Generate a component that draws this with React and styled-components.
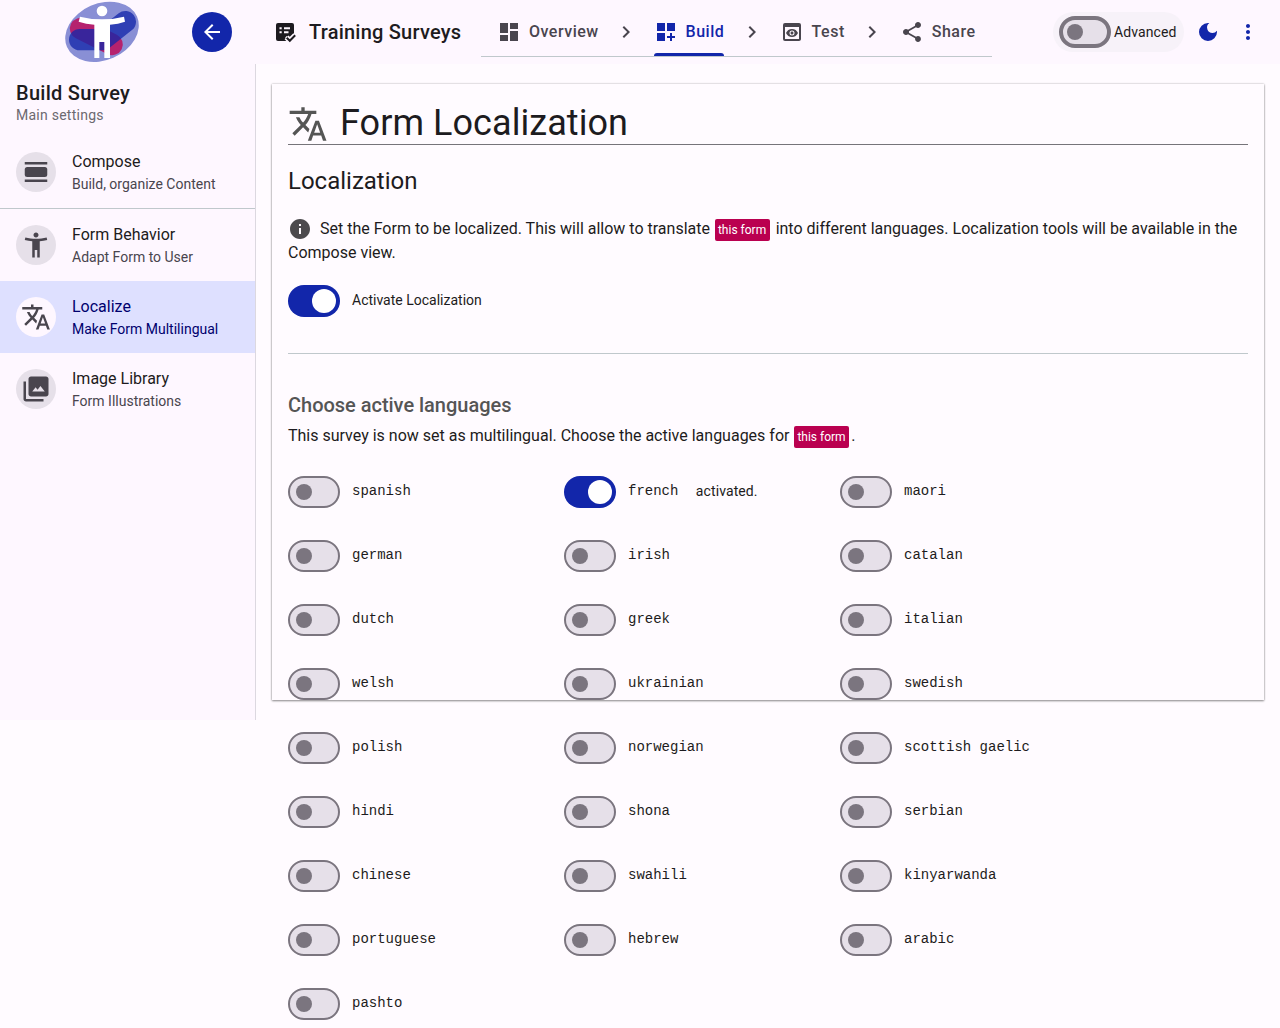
import React from "react";
import styled, { createGlobalStyle, css } from "styled-components";
import {
  MdAccessibilityNew,
  MdArrowBack,
  MdChevronRight,
  MdDarkMode,
  MdDashboard,
  MdDashboardCustomize,
  MdInfo,
  MdMoreVert,
  MdPreview,
  MdShare,
} from "react-icons/md";

const color = {
  primary: "#1226aa",
  surface: "#fef7ff",
  page: "#fffbff",
  text: "#1d1b20",
  muted: "#49454e",
  outline: "#7b757f",
  track: "#e6e0e9",
  line: "#c0c8cc",
  tag: "#ba0050",
};

const GlobalStyle = createGlobalStyle`
  *, *::before, *::after { box-sizing: border-box; }
  body {
    margin: 0;
    background: ${color.page};
    color: ${color.text};
    font-family: Roboto, sans-serif;
    font-size: 16px;
    line-height: 24px;
  }
  h1, h2, h3, p { margin: 0; font-weight: 400; }
`;

const Page = styled.div`
  height: 1028px;
  overflow: hidden;
`;

/* ---------- header ---------- */
const Header = styled.header`
  display: flex;
  align-items: center;
  height: 64px;
  padding-right: 20px;
  background: ${color.surface};
`;
const LogoSlot = styled.div`
  display: flex;
  width: 192px;
  height: 64px;
  padding-left: 65px;
`;
const BackButton = styled.button`
  display: grid;
  place-items: center;
  width: 40px;
  height: 40px;
  padding: 0;
  border: 0;
  border-radius: 50%;
  background: ${color.primary};
  color: #fff;
`;
const Project = styled.div`
  display: flex;
  align-items: center;
  gap: 12px;
  width: 208px;
  margin-left: 41px;
  font-size: 20px;
  font-weight: 500;
  letter-spacing: 0.22px;
  white-space: nowrap;
`;
const Tabs = styled.nav`
  display: flex;
  align-items: center;
  width: 511px;
  height: 49px;
  margin-top: 8px;
  margin-bottom: 7px;
  border-bottom: 1px solid ${color.line};
  color: ${color.muted};
  & > svg { flex: none; }
`;
const Tab = styled.a`
  display: flex;
  height: 48px;
  flex: none;
  width: ${(p) => p.$width}px;
  padding: 0 16px;
  color: ${(p) => (p.$active ? color.primary : color.muted)};
`;
const TabLabel = styled.span`
  position: relative;
  display: flex;
  align-items: center;
  gap: 8px;
  flex: 1;
  font-weight: 500;
  letter-spacing: 0.5px;
  white-space: nowrap;
  ${(p) =>
    p.$active &&
    css`
      &::after {
        content: "";
        position: absolute;
        inset: auto 0 0;
        height: 3px;
        border-radius: 3px 3px 0 0;
        background: ${color.primary};
      }
    `}
  svg { flex: none; }
`;
const Actions = styled.div`
  display: flex;
  align-items: center;
  gap: 12px;
  margin-left: auto;
  color: ${color.primary};
`;
const AdvancedPill = styled.div`
  display: flex;
  align-items: center;
  gap: 3px;
  width: 131px;
  height: 40px;
  padding-left: 6px;
  border-radius: 20px;
  background: #f7f2f9;
  color: ${color.text};
  font-size: 14px;
  letter-spacing: 0.1px;
`;
const MenuSlot = styled.div`
  display: flex;
  padding-left: 4px;
`;

/* ---------- switch ---------- */
const Track = styled.span`
  display: flex;
  flex: none;
  align-items: center;
  justify-content: ${(p) => (p.$on ? "flex-end" : "flex-start")};
  width: 52px;
  height: 32px;
  padding: 0 ${(p) => (p.$on ? 4 : 8 - p.$border)}px;
  border: ${(p) => (p.$on ? "0" : `${p.$border}px solid ${color.outline}`)};
  border-radius: 16px;
  background: ${(p) => (p.$on ? color.primary : color.track)};
`;
const Thumb = styled.span`
  width: ${(p) => (p.$on ? 24 : 16)}px;
  height: ${(p) => (p.$on ? 24 : 16)}px;
  border-radius: 50%;
  background: ${(p) => (p.$on ? "#fff" : color.outline)};
`;
const Switch = ({ on = false, border = 2 }) => (
  <Track $on={on} $border={border} role="switch" aria-checked={on}>
    <Thumb $on={on} />
  </Track>
);

/* ---------- sidebar ---------- */
const Body = styled.div`
  display: flex;
  align-items: flex-start;
`;
const Sidebar = styled.aside`
  flex: none;
  width: 256px;
  height: 656px;
  border-right: 1px solid #dcd8e0;
  background: ${color.surface};
`;
const SidebarHead = styled.div`
  height: 72px;
  padding: 17px 16px 0;
`;
const SidebarTitle = styled.h2`
  font-size: 20px;
  font-weight: 500;
  letter-spacing: 0.28px;
`;
const SidebarHint = styled.p`
  font-size: 14px;
  line-height: 20px;
  letter-spacing: 0.25px;
  color: #6c6970;
`;
const Item = styled.a`
  display: flex;
  gap: 16px;
  height: ${(p) => (p.$divided ? 73 : 72)}px;
  padding: 16px 16px 0;
  border-bottom: ${(p) => (p.$divided ? `1px solid ${color.line}` : "0")};
  background: ${(p) => (p.$active ? "#dee0ff" : "transparent")};
  color: ${(p) => (p.$active ? "#00006e" : color.text)};
`;
const Avatar = styled.span`
  display: grid;
  flex: none;
  place-items: center;
  width: 40px;
  height: 40px;
  border-radius: 50%;
  background: ${(p) => (p.$active ? color.surface : color.track)};
  color: ${color.muted};
`;
const ItemTitle = styled.div`
  margin-top: -2px;
  line-height: 24px;
`;
const ItemText = styled.div`
  font-size: 14px;
  line-height: 20px;
  white-space: nowrap;
  color: ${(p) => (p.$active ? "inherit" : color.muted)};
`;

/* ---------- main ---------- */
const Card = styled.main`
  width: 992px;
  height: 616px;
  margin: 20px 0 0 16px;
  padding: 0 16px;
  box-shadow: 0 1px 2px rgba(0, 0, 0, 0.4), 0 0 2px rgba(0, 0, 0, 0.25);
`;
const CardTitle = styled.h1`
  display: flex;
  align-items: flex-end;
  gap: 12px;
  height: 61px;
  border-bottom: 1px solid #76747a;
  font-size: 36px;
  line-height: 42px;
  letter-spacing: 0.06px;
  svg { color: #555; }
`;
const SectionTitle = styled.h2`
  margin-top: 20px;
  font-size: 24px;
  line-height: 32px;
`;
const Lead = styled.p`
  margin-top: 20px;
  svg {
    margin-right: 8px;
    vertical-align: -7px;
    color: #4c4a4d;
  }
`;
const Tag = styled.span`
  display: inline-block;
  height: 22px;
  margin: 0 2px 0 1px;
  padding: 0 3.5px 0 3px;
  border-radius: 2px;
  background: ${color.tag};
  color: #fff;
  font-size: 12px;
  line-height: 22px;
  vertical-align: 0;
`;
const SwitchRow = styled.label`
  display: flex;
  align-items: center;
  gap: 12px;
  margin-top: 20px;
  font-size: 14px;
`;
const LabelText = styled.span`
  padding-bottom: 2px;
  line-height: 20px;
`;
const Divider = styled.hr`
  margin: 36px 0 0;
  border: 0;
  border-top: 1px solid ${color.line};
`;
const SubTitle = styled.h3`
  margin-top: 39px;
  font-size: 20px;
  font-weight: 500;
  letter-spacing: -0.02px;
  color: #555;
`;
const Note = styled.p`
  margin-top: 7px;
`;
const Languages = styled.div`
  display: grid;
  grid-template-columns: repeat(3, 276px);
  grid-auto-rows: 64px;
  margin-top: 28px;
`;
const Language = styled.div`
  display: flex;
  align-items: center;
  gap: 12px;
  height: 32px;
  font-size: 14px;
  line-height: 20px;
`;
const Code = styled.span`
  padding-bottom: 3px;
  font-family: "Liberation Mono", monospace;
`;
const Status = styled.span`
  padding: 0 0 2px 5.4px;
  letter-spacing: 0.1px;
`;

/* ---------- drawings ---------- */
const Symbol = ({ size, d }) => (
  <svg width={size} height={size} viewBox="0 -960 960 960" fill="currentColor">
    <path d={d} />
  </svg>
);
const translatePath =
  "m476-80 182-480h84L924-80h-84l-43-122H603L560-80h-84ZM160-200l-56-56 202-202q-35-35-63.5-80T190-640h84q20 39 40 68t48 58q33-33 68.5-92.5T484-720H40v-80h280v-80h80v80h280v80H564q-21 72-63 148t-83 116l96 98-30 82-122-125-202 201Zm468-72h144l-72-204-72 204Z";
const libraryPath =
  "M360-400h400L622-580l-92 120-62-80-108 140Zm-40 160q-33 0-56.5-23.5T240-320v-480q0-33 23.5-56.5T320-880h480q33 0 56.5 23.5T880-800v480q0 33-23.5 56.5T800-240H320ZM160-80q-33 0-56.5-23.5T80-160v-560h80v560h560v80H160Z";

const ViewDayIcon = () => (
  <svg width="30" height="30" viewBox="0 0 24 24" fill="currentColor">
    <path d="M3 4h18v2H3zM3 18h18v2H3z" />
    <rect x="3" y="8" width="18" height="8" rx="2" />
  </svg>
);
const SurveyIcon = () => (
  <svg width="24" height="24" viewBox="0 0 24 24">
    <rect x="3" y="3" width="18" height="18" rx="2" fill={color.text} />
    <path
      d="M6.5 8.2h2.2M11 8.2h6M6.5 12.2h2.2M11 12.2h4.5"
      stroke={color.surface}
      strokeWidth="2"
    />
    <path d="m12.2 17.6 1.5-1.5 2.8 2.8 5-5L24 15v8H16z" fill={color.surface} />
    <path d="m13.5 17.4 3.3 3.3 5.5-5.6" fill="none" stroke={color.surface} strokeWidth="5.4" />
    <path d="m13.7 17.7 3.1 3.1 5.4-5.5" fill="none" stroke={color.text} strokeWidth="2" />
  </svg>
);
const Logo = () => (
  <svg width="75" height="64" viewBox="45 0 225 192">
    <ellipse cx="156" cy="95.5" rx="114.5" ry="85" transform="rotate(-23.5 156 95.5)" fill="#898fd5" />
    <path d="M92 86 186 133" stroke="#b5226e" strokeWidth="65" strokeLinecap="round" />
    <path
      d="M89 119H158L226 65"
      fill="none"
      stroke="#1226aa"
      strokeOpacity="0.76"
      strokeWidth="64"
      strokeLinecap="round"
      strokeLinejoin="round"
    />
    <g fill="#fff">
      <circle cx="156" cy="33" r="16" />
      <path d="M90 50Q120 58 156 58T222 50L225 65Q205 72 180 74V174H163V126H148V174H133V74Q108 72 86 65Z" />
    </g>
  </svg>
);

/* ---------- data ---------- */
const tabs = [
  { label: "Overview", icon: MdDashboard, width: 132.6 },
  { label: "Build", icon: MdDashboardCustomize, width: 102, active: true },
  { label: "Test", icon: MdPreview, width: 96.2 },
  { label: "Share", icon: MdShare, width: 108 },
];
const items = [
  { title: "Compose", text: "Build, organize Content", icon: <ViewDayIcon />, divided: true },
  { title: "Form Behavior", text: "Adapt Form to User", icon: <MdAccessibilityNew size={30} /> },
  {
    title: "Localize",
    text: "Make Form Multilingual",
    icon: <Symbol size={30} d={translatePath} />,
    active: true,
  },
  { title: "Image Library", text: "Form Illustrations", icon: <Symbol size={30} d={libraryPath} /> },
];
const languages = [
  "spanish", "french", "maori",
  "german", "irish", "catalan",
  "dutch", "greek", "italian",
  "welsh", "ukrainian", "swedish",
  "polish", "norwegian", "scottish gaelic",
  "hindi", "shona", "serbian",
  "chinese", "swahili", "kinyarwanda",
  "portuguese", "hebrew", "arabic",
  "pashto",
];
const activeLanguages = ["french"];

export default function App() {
  return (
    <Page>
      <GlobalStyle />
      <Header>
        <LogoSlot>
          <Logo />
        </LogoSlot>
        <BackButton aria-label="Back">
          <MdArrowBack size={24} />
        </BackButton>
        <Project>
          <SurveyIcon />
          Training Surveys
        </Project>
        <Tabs>
          {tabs.map(({ label, icon: Icon, width, active }, i) => (
            <React.Fragment key={label}>
              {i > 0 && <MdChevronRight size={24} />}
              <Tab $width={width} $active={active}>
                <TabLabel $active={active}>
                  <Icon size={24} />
                  {label}
                </TabLabel>
              </Tab>
            </React.Fragment>
          ))}
        </Tabs>
        <Actions>
          <AdvancedPill>
            <Switch border={4} />
            Advanced
          </AdvancedPill>
          <MdDarkMode size={24} />
          <MenuSlot>
            <MdMoreVert size={24} />
          </MenuSlot>
        </Actions>
      </Header>
      <Body>
        <Sidebar>
          <SidebarHead>
            <SidebarTitle>Build Survey</SidebarTitle>
            <SidebarHint>Main settings</SidebarHint>
          </SidebarHead>
          {items.map((item) => (
            <Item key={item.title} $active={item.active} $divided={item.divided}>
              <Avatar $active={item.active}>{item.icon}</Avatar>
              <div>
                <ItemTitle>{item.title}</ItemTitle>
                <ItemText $active={item.active}>{item.text}</ItemText>
              </div>
            </Item>
          ))}
        </Sidebar>
        <Card>
          <CardTitle>
            <Symbol size={40} d={translatePath} />
            Form Localization
          </CardTitle>
          <SectionTitle>Localization</SectionTitle>
          <Lead>
            <MdInfo size={24} />
            Set the Form to be localized. This will allow to translate <Tag>this form</Tag> into
            different languages. Localization tools will be available in the Compose view.
          </Lead>
          <SwitchRow>
            <Switch on />
            <LabelText>Activate Localization</LabelText>
          </SwitchRow>
          <Divider />
          <SubTitle>Choose active languages</SubTitle>
          <Note>
            This survey is now set as multilingual. Choose the active languages for{" "}
            <Tag>this form</Tag>.
          </Note>
          <Languages>
            {languages.map((name) => {
              const on = activeLanguages.includes(name);
              return (
                <Language key={name}>
                  <Switch on={on} />
                  <Code>{name}</Code>
                  {on && <Status>activated.</Status>}
                </Language>
              );
            })}
          </Languages>
        </Card>
      </Body>
    </Page>
  );
}
